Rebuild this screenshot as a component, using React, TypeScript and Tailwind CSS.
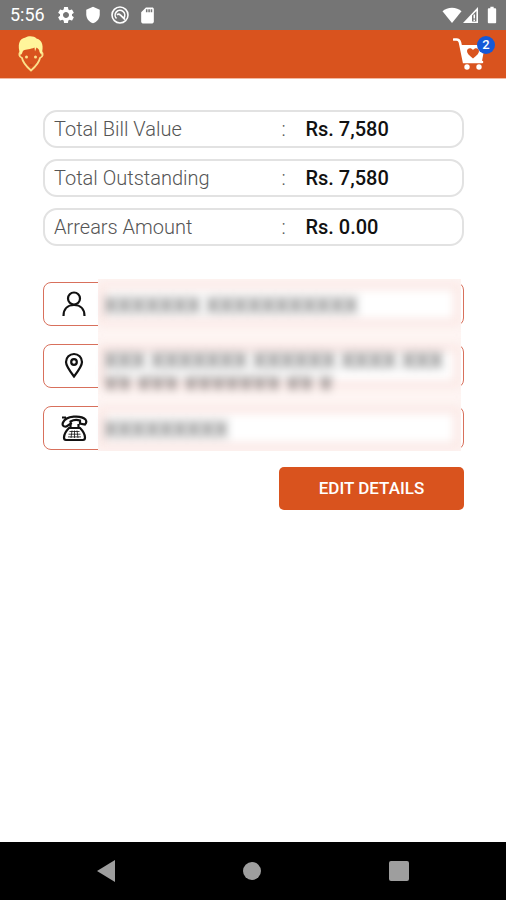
import { FunctionComponent, ReactNode } from "react";
import { MdBatteryFull, MdSdCard, MdSettings, MdShield } from "react-icons/md";

const totals = [
  { name: "Total Bill Value", value: "Rs. 7,580" },
  { name: "Total Outstanding", value: "Rs. 7,580" },
  { name: "Arrears Amount", value: "Rs. 0.00" },
];

const StatusBar: FunctionComponent = () => (
  <div className="h-[30px] pl-[10px] pr-[4px] flex items-center justify-between bg-[#757575] text-white">
    <div className="flex items-center">
      <span className="w-[46px] text-[18px] leading-5">5:56</span>
      <MdSettings size={20} />
      <MdShield size={18} className="ml-2" />
      <svg className="ml-2" width={20} height={20} viewBox="0 0 20 20" fill="none" stroke="currentColor">
        <circle cx="10" cy="10" r="8" strokeWidth="1.6" />
        <path d="M6.500 13.500a4.800 4.800 0 1 1 7.300-.5" strokeWidth="1.600" />
        <path d="M7 9.800c1.500-1.200 2.500-.8 3.500.4l4.500 4.500" strokeWidth="1.700" />
      </svg>
      <MdSdCard size={19} className="ml-2" />
    </div>
    <div className="flex items-center">
      <svg width={20} height={16} viewBox="0 0 20 16" fill="currentColor">
        <path d="M10 16 0.500 4.200C5-0.500 15-0.500 19.500 4.200Z" />
      </svg>
      <svg className="ml-px" width={15} height={16} viewBox="0 0 15 16" fill="currentColor">
        <path fillRule="evenodd" d="M15 0v16H0ZM13.400 4 9 8.600v5.800h4.400Z" />
        <path d="M10.500 7.500h1.500v4h-1.500zM10.500 12.500h1.500v1.500h-1.500z" />
      </svg>
      <MdBatteryFull size={20} className="ml-1" />
    </div>
  </div>
);

const Header: FunctionComponent = () => (
  <header className="h-[49px] px-[11px] flex items-center justify-between bg-[#d9531e] border-b border-[#f3b9a2]">
    <button aria-label="Profile" className="w-10 h-10 flex items-center justify-center">
      <svg width={28} height={38} viewBox="0 0 28 38">
        <path
          d="M3.500 17c-2 1.500-1.500 5 1.500 6 1 5.500 5 9 9 12.500 4-3.500 8-7 9-12.500 3-1 3.500-4.500 1.500-6"
          fill="none"
          stroke="#fbe08a"
          strokeWidth="1.800"
        />
        <path
          d="M3.500 20C0 10 2 3.500 8.500 2.500c3-2 9-1.500 11 1C25.500 5 27 11 24.500 20L22.500 17c0-2-1-3-3-4.500l-1.500 4-.5-4c-4 2-8.500 1.500-11 3-1.500 1-.5 3-3 4.500Z"
          fill="#fff59b"
        />
        <circle cx="9.500" cy="22" r="1.500" fill="#fbe08a" />
        <circle cx="18.500" cy="22" r="1.500" fill="#fbe08a" />
        <path d="M12.500 30h3" stroke="#b8421a" strokeWidth="1" />
      </svg>
    </button>
    <button aria-label="Cart" className="relative w-[42px] h-9 flex items-center">
      <svg width={34} height={34} viewBox="0 0 34 34">
        <path d="M1 2.500h2.500c2 0 3 1 3.500 3L11 25h18" fill="none" stroke="white" strokeWidth="2.600" strokeLinecap="round" />
        <path d="M8 8h24l-3 16H11Z" fill="white" />
        <path
          d="M20 21.500c-4-3.200-6-5-6-7.500 0-3 4-4 6-1 2-3 6-2 6 1 0 2.500-2 4.300-6 7.500Z"
          fill="#d9531e"
        />
        <circle cx="14" cy="30" r="2.700" fill="white" />
        <circle cx="26" cy="30" r="2.700" fill="white" />
      </svg>
      <span className="absolute top-0 right-0 w-[18px] h-[18px] rounded-full bg-[#1659d8] text-white text-[13px] leading-[18px] font-medium text-center">
        2
      </span>
    </button>
  </header>
);

const UserIcon = () => (
  <svg width={28} height={28} viewBox="0 0 28 28" fill="none" stroke="#111" strokeWidth="2.200">
    <circle cx="14" cy="8.500" r="6" />
    <path d="M3.500 26c0-7.500 4.500-11 10.500-11s10.500 3.500 10.500 11" />
  </svg>
);

const PinIcon = () => (
  <svg width={28} height={28} viewBox="0 0 28 28" fill="none" stroke="#111" strokeWidth="2.200">
    <path d="M14 24.500C9 18 6 14 6 10a8 8 0 0 1 16 0C22 14 19 18 14 24.500Z" />
    <circle cx="14" cy="10" r="2.800" />
  </svg>
);

const PhoneIcon = () => (
  <svg width={28} height={28} viewBox="0 0 28 28" fill="none" stroke="#111" strokeWidth="2.200">
    <path d="M3 8.500C6 1.500 21 1 25.500 5.500c1 1.500 1 3.500-.5 5l-5-1V6.500c-3-1-7-.5-9.500 1l.5 2-4.500 3C3 13 2 11 3 8.500ZM2 3.500h4" />
    <path d="M10.500 10v3M18.500 10v3M9 14h11c3 3 5 6 5 9.500 0 1.500-1 2.500-2 2.500H6c-1 0-2-1-2-2.500C4 20 6 17 9 14Z" />
    <path d="M9.500 17.500h10M8.500 20.200h12M8 22.900h13M12 16.500l-1 7.500M14.500 16.500V24M17 16.500l1 7.500" strokeWidth="0.800" />
  </svg>
);

interface FieldProps {
  id: string;
  name: string;
  icon: ReactNode;
  children: ReactNode;
}

const Field: FunctionComponent<FieldProps> = ({ id, name, icon, children }) => (
  <div className="h-11 flex border border-[#d8705c] rounded-lg">
    <label htmlFor={id} aria-label={name} className="w-[60px] shrink-0 flex items-center justify-center">
      {icon}
    </label>
    <div className="relative z-20 flex-1 min-w-0">{children}</div>
  </div>
);

const hidden = "block w-full resize-none overflow-hidden bg-transparent text-[22px] text-black/80 blur-[5px] outline-none";

const App: FunctionComponent = () => {
  return (
    <div className="min-h-screen flex flex-col bg-white font-['Roboto',sans-serif]">
      <StatusBar />
      <Header />

      <main className="flex-1 pl-[43px] pr-[42px] pt-[31px]">
        <dl className="flex flex-col gap-[11px]">
          {totals.map(({ name, value }) => (
            <div
              key={name}
              className="h-[38px] pl-[9px] flex items-center border-2 border-[#e2e2e2] rounded-[14px] text-[20px]"
            >
              <dt className="flex-[228] font-light text-[#555]">{name}</dt>
              <span className="w-6 font-light text-[#555]">:</span>
              <dd className="flex-[157] font-medium text-[#111]">{value}</dd>
            </div>
          ))}
        </dl>

        <form className="mt-9 flex flex-col gap-[17px]">
          <div className="relative flex flex-col gap-[18px]">
            <div className="absolute z-10 -top-[3px] -bottom-px left-[55px] right-[3px] py-[3px] flex flex-col gap-[18px] overflow-hidden bg-[#fef5f3]">
              <div className="h-11 shrink-0 border-8 border-[#fbeae7] bg-white blur-[4px]" />
              <div className="h-11 shrink-0 border-8 border-[#fbeae7] bg-white blur-[4px]" />
              <div className="h-11 shrink-0 border-8 border-[#fbeae7] bg-white blur-[4px]" />
            </div>

            <Field id="name" name="Name" icon={<UserIcon />}>
              <input id="name" readOnly defaultValue="XXXXXXX XXXXXXXXXXX" className={`${hidden} h-11`} />
            </Field>
            <Field id="address" name="Address" icon={<PinIcon />}>
              <textarea
                id="address"
                readOnly
                defaultValue={"XXX XXXXXXX XXXXXX XXXX XXX\nXX XXX XXXXXXX XX X"}
                className={`${hidden} h-11 pt-1 leading-6 whitespace-pre`}
              />
            </Field>
            <Field id="phone" name="Phone" icon={<PhoneIcon />}>
              <input id="phone" readOnly defaultValue="XXXXXXXXX" className={`${hidden} h-11`} />
            </Field>
          </div>

          <button
            type="button"
            className="self-end w-[185px] h-[43px] rounded-[5px] bg-[#d9531e] text-white text-[17px] font-medium"
          >
            EDIT DETAILS
          </button>
        </form>
      </main>

      <nav className="h-[58px] px-[97px] flex items-center justify-between bg-black">
        <button aria-label="Back">
          <svg width={18} height={22} viewBox="0 0 18 22" fill="#9e9e9e">
            <path d="M18 0v22L0 11Z" />
          </svg>
        </button>
        <button aria-label="Home" className="w-[18px] h-[18px] rounded-full bg-[#9e9e9e]" />
        <button aria-label="Recent apps" className="w-5 h-5 rounded-xs bg-[#9e9e9e]" />
      </nav>
    </div>
  );
};

export default App;
